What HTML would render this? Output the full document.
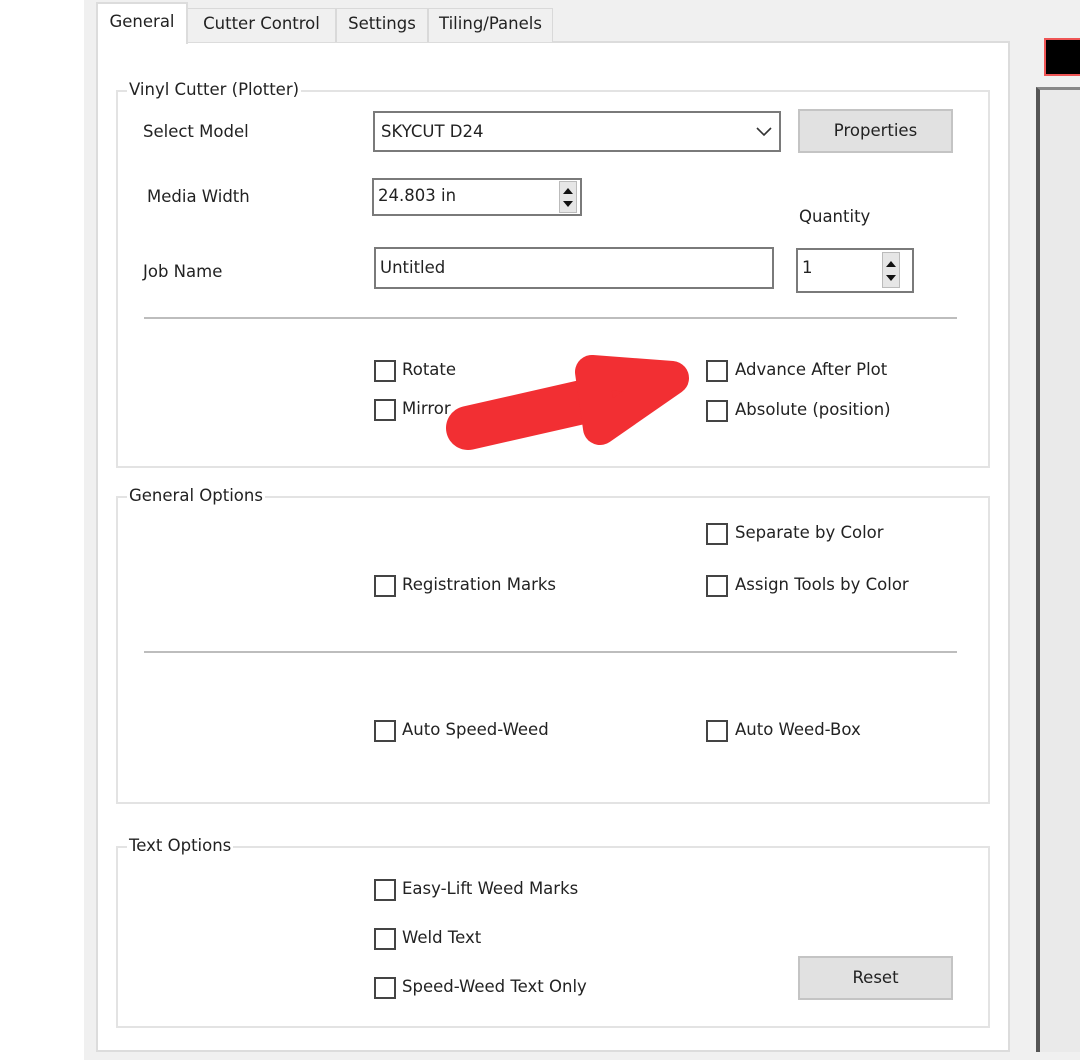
<!DOCTYPE html>
<html><head><meta charset="utf-8"><style>
*{margin:0;padding:0;box-sizing:border-box}
body{width:1080px;height:1060px;position:relative;overflow:hidden;background:#fff;font-family:"DejaVu Sans","Liberation Sans",sans-serif;font-size:16.5px;color:#222}
.a{position:absolute}
.t{position:absolute;white-space:nowrap;line-height:20px}
.tab{position:absolute;top:8px;height:34px;background:#f0f0f0;border:1px solid #d9d9d9;border-bottom:none;text-align:center;line-height:30px;white-space:nowrap}
.grp{position:absolute;border:2px solid #e3e3e3}
.lbl{position:absolute;background:#fff;padding:0 2px;line-height:20px;white-space:nowrap}
.cb{position:absolute;width:22px;height:22px;border:2px solid #444;background:#fff}
.box{position:absolute;border:2px solid #7a7a7a;background:#fff}
.btn{position:absolute;background:#e1e1e1;border:2px solid #c4c4c4;text-align:center;white-space:nowrap}
.hr{position:absolute;height:2px;background:#bdbdbd}
.spin{position:absolute;width:18px;background:#e6e6e6;border:1px solid #bbb}
.up,.dn{position:absolute;left:3px;width:0;height:0;border-left:5px solid transparent;border-right:5px solid transparent}
.up{border-bottom:6px solid #111}
.dn{border-top:6px solid #111}
</style></head><body>
<div class="a" style="left:84px;top:0;width:996px;height:1060px;background:#f0f0f0"></div>
<!-- page -->
<div class="a" style="left:96px;top:41px;width:914px;height:1011px;background:#fff;border:2px solid #dcdcdc"></div>
<!-- tabs -->
<div class="tab" style="left:187px;width:149px">Cutter Control</div>
<div class="tab" style="left:336px;width:92px">Settings</div>
<div class="tab" style="left:428px;width:125px">Tiling/Panels</div>
<div class="a" style="left:96px;top:2px;width:92px;height:42px;background:#fff;border:2px solid #dcdcdc;border-bottom:none;text-align:center;line-height:36px">General</div>

<!-- right side -->
<div class="a" style="left:1044px;top:38px;width:40px;height:38px;background:#000;border:2px solid #e55"></div>
<div class="a" style="left:1036px;top:87px;width:44px;height:965px;background:#eaeaea;border-left:4px solid #555;border-top:3px solid #888"></div>

<!-- Vinyl group -->
<div class="grp" style="left:116px;top:90px;width:874px;height:378px"></div>
<div class="lbl" style="left:127px;top:80px">Vinyl Cutter (Plotter)</div>
<div class="t" style="left:143px;top:122px">Select Model</div>
<div class="box" style="left:373px;top:111px;width:408px;height:41px"></div>
<div class="t" style="left:381px;top:122px">SKYCUT D24</div>
<svg class="a" style="left:755px;top:125px" width="20" height="14"><path d="M2 3 L9 10 L16 3" fill="none" stroke="#333" stroke-width="1.6"/></svg>
<div class="btn" style="left:798px;top:109px;width:155px;height:44px;line-height:40px">Properties</div>

<div class="t" style="left:147px;top:187px">Media Width</div>
<div class="box" style="left:372px;top:178px;width:210px;height:38px"></div>
<div class="t" style="left:378px;top:186px">24.803 in</div>
<div class="spin" style="left:559px;top:181px;height:32px"><div class="up" style="top:6px"></div><div class="dn" style="top:19px"></div></div>

<div class="t" style="left:799px;top:207px">Quantity</div>
<div class="t" style="left:143px;top:262px">Job Name</div>
<div class="box" style="left:374px;top:247px;width:400px;height:42px"></div>
<div class="t" style="left:380px;top:258px">Untitled</div>
<div class="box" style="left:796px;top:248px;width:118px;height:45px"></div>
<div class="t" style="left:802px;top:258px">1</div>
<div class="spin" style="left:882px;top:252px;height:36px"><div class="up" style="top:8px"></div><div class="dn" style="top:22px"></div></div>

<div class="hr" style="left:144px;top:317px;width:813px"></div>

<div class="cb" style="left:374px;top:360px"></div><div class="t" style="left:402px;top:360px">Rotate</div>
<div class="cb" style="left:374px;top:399px"></div><div class="t" style="left:402px;top:399px">Mirror</div>
<div class="cb" style="left:706px;top:360px"></div><div class="t" style="left:735px;top:360px">Advance After Plot</div>
<div class="cb" style="left:706px;top:400px"></div><div class="t" style="left:735px;top:400px">Absolute (position)</div>

<!-- General options -->
<div class="grp" style="left:116px;top:496px;width:874px;height:308px"></div>
<div class="lbl" style="left:127px;top:486px">General Options</div>
<div class="cb" style="left:706px;top:523px"></div><div class="t" style="left:735px;top:523px">Separate by Color</div>
<div class="cb" style="left:374px;top:575px"></div><div class="t" style="left:402px;top:575px">Registration Marks</div>
<div class="cb" style="left:706px;top:575px"></div><div class="t" style="left:735px;top:575px">Assign Tools by Color</div>
<div class="hr" style="left:144px;top:651px;width:813px"></div>
<div class="cb" style="left:374px;top:720px"></div><div class="t" style="left:402px;top:720px">Auto Speed-Weed</div>
<div class="cb" style="left:706px;top:720px"></div><div class="t" style="left:735px;top:720px">Auto Weed-Box</div>

<!-- Text options -->
<div class="grp" style="left:116px;top:846px;width:874px;height:182px"></div>
<div class="lbl" style="left:127px;top:836px">Text Options</div>
<div class="cb" style="left:374px;top:879px"></div><div class="t" style="left:402px;top:879px">Easy-Lift Weed Marks</div>
<div class="cb" style="left:374px;top:928px"></div><div class="t" style="left:402px;top:928px">Weld Text</div>
<div class="cb" style="left:374px;top:977px"></div><div class="t" style="left:402px;top:977px">Speed-Weed Text Only</div>
<div class="btn" style="left:798px;top:956px;width:155px;height:44px;line-height:40px">Reset</div>

<!-- arrow -->
<svg class="a" style="left:0;top:0" width="1080" height="1060">
<path d="M468 428 L600 398" stroke="#f22f33" stroke-width="44" stroke-linecap="round" fill="none"/>
<path d="M592 372 L672 378 L600 428 Z" fill="#f22f33" stroke="#f22f33" stroke-width="34" stroke-linejoin="round"/>
</svg>
</body></html>
